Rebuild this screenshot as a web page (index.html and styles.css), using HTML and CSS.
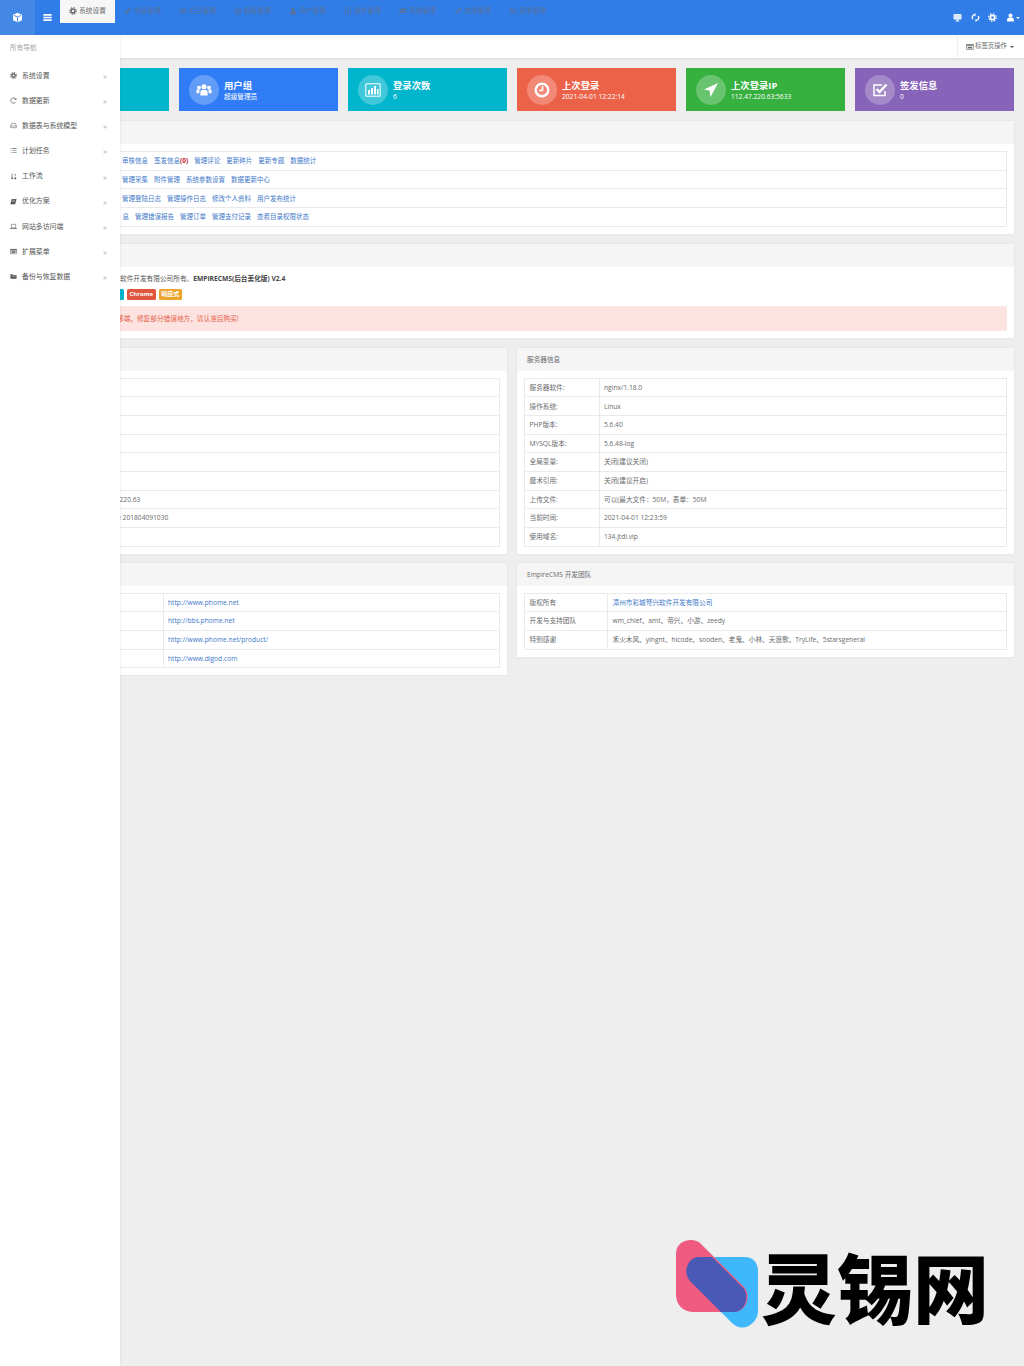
FILE: index.html
```html
<!DOCTYPE html>
<html lang="zh-CN">
<head>
<meta charset="utf-8">
<title>系统设置</title>
<link rel="stylesheet" href="styles.css">
</head>
<body>
<svg class="defs" width="0" height="0">
  <symbol id="cog" viewBox="0 0 16 16"><circle cx="8" cy="8" r="3.8" fill="none" stroke="currentColor" stroke-width="3"/><circle cx="8" cy="8" r="6.6" fill="none" stroke="currentColor" stroke-width="2.4" stroke-dasharray="2.6 2.58"/></symbol>
  <symbol id="pencil" viewBox="0 0 16 16"><path fill="currentColor" d="M1 15l1-4 8-8 3 3-8 8zM11 2l1-1 3 3-1 1z"/></symbol>
  <symbol id="list" viewBox="0 0 16 16"><path fill="currentColor" d="M1 3h14v2H1zM1 7h14v2H1zM1 11h14v2H1z"/></symbol>
  <symbol id="globe" viewBox="0 0 16 16"><circle cx="8" cy="8" r="6.5" fill="none" stroke="currentColor" stroke-width="1.5"/><path d="M1.5 8h13M8 1.5c-4 4-4 9 0 13M8 1.5c4 4 4 9 0 13" fill="none" stroke="currentColor"/></symbol>
  <symbol id="user" viewBox="0 0 16 16"><circle cx="8" cy="4.5" r="3.5" fill="currentColor"/><path fill="currentColor" d="M2 15v-3c0-2.500 2-4 3.500-4h5c1.500 0 3.500 1.500 3.500 4v3z"/></symbol>
  <symbol id="file" viewBox="0 0 16 16"><path fill="none" stroke="currentColor" stroke-width="1.5" d="M3 1.500h7l3 3v10H3zM5.500 7h5M5.500 10h5"/></symbol>
  <symbol id="truck" viewBox="0 0 16 16"><path fill="currentColor" d="M1 3h14v9H1z"/><path fill="none" stroke="#317de8" d="M1 7h14"/></symbol>
  <symbol id="wrench" viewBox="0 0 16 16"><path fill="currentColor" d="M1.500 12.500L8 6a4 4 0 0 1 5-5l-2.500 2.500 2 2L15 3a4 4 0 0 1-5 5l-6.500 6.500z"/></symbol>
  <symbol id="sliders" viewBox="0 0 16 16"><path fill="none" stroke="currentColor" stroke-width="1.500" d="M1 4h14M1 8h14M1 12h14M5 2v4M10 6v4M6 10v4"/></symbol>
  <symbol id="cube" viewBox="0 0 16 16"><path fill="currentColor" d="M8 1l6.500 3v8L8 15l-6.500-3V4z"/><path fill="none" stroke="#4488e6" stroke-width="1.400" d="M3 5l5 2.400L13 5M8 7.400V14"/></symbol>
  <symbol id="bars" viewBox="0 0 16 16"><path fill="currentColor" d="M2 3h12v2.400H2zM2 6.800h12v2.400H2zM2 10.600h12V13H2z"/></symbol>
  <symbol id="desktop" viewBox="0 0 16 16"><path fill="none" stroke="currentColor" stroke-width="1.600" d="M1.800 2.800h12.400v8H1.800z"/><path fill="currentColor" opacity=".8" d="M2 3h12v7.500H2z"/><path fill="currentColor" d="M5 13.500h6V15H5zM7 11h2v3H7z"/></symbol>
  <symbol id="refresh" viewBox="0 0 16 16"><path fill="none" stroke="currentColor" stroke-width="2.400" d="M4.800 3.500a5.500 5.500 0 0 0-1.500 7.500M11.200 12.500a5.500 5.500 0 0 0 1.500-7.500"/><path fill="currentColor" d="M8 0v6L4 3zM8 16v-6l4 3z"/></symbol>
  <symbol id="reload" viewBox="0 0 16 16"><path fill="none" stroke="currentColor" stroke-width="1.600" d="M13 11a6 6 0 1 1 0-6"/><path fill="currentColor" d="M14.500 2v4.500H10z"/></symbol>
  <symbol id="hdd" viewBox="0 0 16 16"><path fill="none" stroke="currentColor" stroke-width="1.200" d="M1.500 9L4 3h8l2.500 6v4h-13zM1.500 9h13"/></symbol>
  <symbol id="tasks" viewBox="0 0 16 16"><path fill="currentColor" d="M5 3h10v1.300H5zM5 7.500h10v1.300H5zM5 12h10v1.300H5zM1 3h2v1.300H1zM1 7.500h2v1.300H1zM1 12h2v1.300H1z"/></symbol>
  <symbol id="sort" viewBox="0 0 16 16"><path fill="currentColor" d="M4 1h1.500v10H8l-3 4-3-4h2zM10 2h3v6h-1V3.500h-2zM10 10h4v4h-4z"/></symbol>
  <symbol id="book" viewBox="0 0 16 16"><path fill="currentColor" d="M4 2h11l-3 11H1zM1 13v1.500h11V13z"/><path stroke="#fff" d="M5.500 5h6M4.800 8h6"/></symbol>
  <symbol id="laptop" viewBox="0 0 16 16"><path fill="none" stroke="currentColor" stroke-width="1.200" d="M3 3h10v8H3z"/><path fill="currentColor" d="M0 12h16v1.500H0z"/></symbol>
  <symbol id="window" viewBox="0 0 16 16"><path fill="none" stroke="currentColor" stroke-width="1.200" d="M1 3h14v10H1z"/><path fill="currentColor" d="M1 3h14v2.500H1zM3.500 7.500h9V11h-9z"/></symbol>
  <symbol id="folder" viewBox="0 0 16 16"><path fill="currentColor" d="M1 3h5l1.500 1.500H15V13H1z"/><path stroke="#fff" d="M3 7h12"/></symbol>
  <symbol id="group" viewBox="0 0 20 16"><circle cx="10" cy="4" r="3.200" fill="currentColor"/><circle cx="3.800" cy="5" r="2.300" fill="currentColor"/><circle cx="16.200" cy="5" r="2.300" fill="currentColor"/><path fill="currentColor" d="M5.500 15V10.500C5.500 8.500 7 8 8 8h4c1 0 2.500.5 2.500 2.500V15zM.5 12V9c0-1 1-1.500 2-1.500h2l-.5 4.500zM19.500 12V9c0-1-1-1.500-2-1.500h-2l.5 4.500z"/></symbol>
  <symbol id="chart" viewBox="0 0 16 16"><path fill="none" stroke="currentColor" d="M.8 1.800h14.400v12.400H.8z"/><path fill="currentColor" d="M3 8h2v4.500H3zM6 6h2v6.500H6zM9 4h2v8.500H9zM12 7h1.500v5.500H12z"/></symbol>
  <symbol id="clock" viewBox="0 0 16 16"><circle cx="8" cy="8" r="6.300" fill="none" stroke="currentColor" stroke-width="2.400"/><path fill="none" stroke="currentColor" stroke-width="1.600" d="M8.500 4v4.500H5"/></symbol>
  <symbol id="send" viewBox="0 0 16 16"><path fill="currentColor" d="M15 1L7.500 15l-1-6.500L1 7.500z"/></symbol>
  <symbol id="check" viewBox="0 0 16 16"><path fill="none" stroke="currentColor" stroke-width="1.500" d="M13 9v4.500H2V3h8"/><path fill="none" stroke="currentColor" stroke-width="2.400" d="M4.500 7l3 3L14.500 2.500"/></symbol>
</svg>

<header class="topbar">
  <div class="brand"><svg class="ic-brand"><use href="#cube"/></svg></div>
  <div class="toggle"><svg class="ic-brand"><use href="#bars"/></svg></div>
  <nav class="tabs">
    <a class="tab active"><svg class="ic"><use href="#cog"/></svg>系统设置</a>
    <a class="tab"><svg class="ic"><use href="#pencil"/></svg>信息管理</a>
    <a class="tab"><svg class="ic"><use href="#list"/></svg>栏目管理</a>
    <a class="tab"><svg class="ic"><use href="#globe"/></svg>模板管理</a>
    <a class="tab"><svg class="ic"><use href="#user"/></svg>用户管理</a>
    <a class="tab"><svg class="ic"><use href="#file"/></svg>插件管理</a>
    <a class="tab"><svg class="ic"><use href="#truck"/></svg>商城管理</a>
    <a class="tab"><svg class="ic"><use href="#wrench"/></svg>其他管理</a>
    <a class="tab"><svg class="ic"><use href="#sliders"/></svg>菜单管理</a>
  </nav>
  <div class="tools">
    <svg class="ic-tool"><use href="#desktop"/></svg>
    <svg class="ic-tool"><use href="#refresh"/></svg>
    <svg class="ic-tool"><use href="#cog"/></svg>
    <svg class="ic-tool"><use href="#user"/></svg>
    <span class="caret caret-white"></span>
  </div>
</header>

<div class="tabbar">
  <button class="tabops"><svg class="ic"><use href="#window"/></svg>标签页操作<span class="caret"></span></button>
</div>

<aside class="sidebar">
  <div class="side-title">所有导航</div>
  <ul class="side-menu">
    <li><svg class="ic"><use href="#cog"/></svg><span>系统设置</span><b>»</b></li>
    <li><svg class="ic"><use href="#reload"/></svg><span>数据更新</span><b>»</b></li>
    <li><svg class="ic"><use href="#hdd"/></svg><span>数据表与系统模型</span><b>»</b></li>
    <li><svg class="ic"><use href="#tasks"/></svg><span>计划任务</span><b>»</b></li>
    <li><svg class="ic"><use href="#sort"/></svg><span>工作流</span><b>»</b></li>
    <li><svg class="ic"><use href="#book"/></svg><span>优化方案</span><b>»</b></li>
    <li><svg class="ic"><use href="#laptop"/></svg><span>网站多访问端</span><b>»</b></li>
    <li><svg class="ic"><use href="#window"/></svg><span>扩展菜单</span><b>»</b></li>
    <li><svg class="ic"><use href="#folder"/></svg><span>备份与恢复数据</span><b>»</b></li>
  </ul>
</aside>

<main class="content">
  <section class="cards">
    <div class="card teal"></div>
    <div class="card blue"><span class="disc"><svg><use href="#group"/></svg></span><div><h3>用户组</h3><p>超级管理员</p></div></div>
    <div class="card teal"><span class="disc"><svg><use href="#chart"/></svg></span><div><h3>登录次数</h3><p>6</p></div></div>
    <div class="card orange"><span class="disc"><svg><use href="#clock"/></svg></span><div><h3>上次登录</h3><p>2021-04-01 12:22:14</p></div></div>
    <div class="card green"><span class="disc"><svg><use href="#send"/></svg></span><div><h3>上次登录IP</h3><p>112.47.220.63:5633</p></div></div>
    <div class="card purple"><span class="disc"><svg><use href="#check"/></svg></span><div><h3>签发信息</h3><p>0</p></div></div>
  </section>

  <section class="panel">
    <div class="panel-head"></div>
    <div class="panel-body">
      <table class="grid">
        <tr><td><div class="linkrow"><a>审核信息</a><a>签发信息<em>(0)</em></a><a>管理评论</a><a>更新碎片</a><a>更新专题</a><a>数据统计</a></div></td></tr>
        <tr><td><div class="linkrow"><a>管理采集</a><a>附件管理</a><a>系统参数设置</a><a>数据更新中心</a></div></td></tr>
        <tr><td><div class="linkrow"><a>管理登陆日志</a><a>管理操作日志</a><a>修改个人资料</a><a>用户发布统计</a></div></td></tr>
        <tr><td><div class="linkrow linkrow-wide"><a>息</a><a>管理错误报告</a><a>管理订单</a><a>管理支付记录</a><a>查看目录权限状态</a></div></td></tr>
      </table>
    </div>
  </section>

  <section class="panel">
    <div class="panel-head"></div>
    <div class="panel-body notice">
      <p class="copy">软件开发有限公司所有。<strong>EMPIRECMS(后台美化版) V2.4</strong></p>
      <div class="badges"><span class="badge b-teal"></span><span class="badge b-red">Chrome</span><span class="badge b-amber">响应式</span></div>
      <div class="alert">移端，修复部分错误地方，请认准后购买!</div>
    </div>
  </section>

  <section class="columns">
    <div class="panel">
      <div class="panel-head"></div>
      <div class="panel-body">
        <table class="grid info">
          <tr><td></td><td></td></tr>
          <tr><td></td><td></td></tr>
          <tr><td></td><td></td></tr>
          <tr><td></td><td></td></tr>
          <tr><td></td><td></td></tr>
          <tr><td></td><td></td></tr>
          <tr><td></td><td>112.47.220.63</td></tr>
          <tr><td></td><td>Release 201804091030</td></tr>
          <tr><td></td><td></td></tr>
        </table>
      </div>
    </div>
    <div class="panel">
      <h4 class="panel-head">服务器信息</h4>
      <div class="panel-body">
        <table class="grid info">
          <tr><td>服务器软件:</td><td>nginx/1.18.0</td></tr>
          <tr><td>操作系统:</td><td>Linux</td></tr>
          <tr><td>PHP版本:</td><td>5.6.40</td></tr>
          <tr><td>MYSQL版本:</td><td>5.6.48-log</td></tr>
          <tr><td>全局变量:</td><td>关闭(建议关闭)</td></tr>
          <tr><td>魔术引用:</td><td>关闭(建议开启)</td></tr>
          <tr><td>上传文件:</td><td>可以(最大文件：50M，表单：50M</td></tr>
          <tr><td>当前时间:</td><td>2021-04-01 12:23:59</td></tr>
          <tr><td>使用域名:</td><td>134.jtdl.vip</td></tr>
        </table>
      </div>
    </div>
    <div class="panel">
      <div class="panel-head"></div>
      <div class="panel-body">
        <table class="grid sites">
          <tr><td></td><td><a>http://www.phome.net</a></td></tr>
          <tr><td></td><td><a>http://bbs.phome.net</a></td></tr>
          <tr><td></td><td><a>http://www.phome.net/product/</a></td></tr>
          <tr><td></td><td><a>http://www.digod.com</a></td></tr>
        </table>
      </div>
    </div>
    <div class="panel">
      <h4 class="panel-head">EmpireCMS 开发团队</h4>
      <div class="panel-body">
        <table class="grid team">
          <tr><td>版权所有</td><td><a>漳州市彩城弩兴软件开发有限公司</a></td></tr>
          <tr><td>开发与支持团队</td><td>wm_chief、amt、帝兴、小游、zeedy</td></tr>
          <tr><td>特别感谢</td><td>禾火木风、yingnt、hicode、sooden、老鬼、小林、天浪歌、TryLife、5starsgeneral</td></tr>
        </table>
      </div>
    </div>
  </section>
</main>

<div class="watermark">
  <svg class="wm-mark" viewBox="0 0 82 89">
    <path fill="#3fb8fb" d="M24 17H69C77 17 82 23 82 31V71C82 83 67 94 56 83L14 41C6 33 12 17 24 17Z"/>
    <path fill="#ee5a80" d="M0 14C0 4 8 0 15 0C19 0 22 1 25 4L68 47C76 56 70 72 58 72H18C7 72 0 65 0 54Z"/>
    <path fill="#4a58b6" d="M23 17H36L68 49C74 58 68 72 58 72H45L14 41C6 32 12 17 23 17Z"/>
  </svg>
  <span class="wm-text">灵锡网</span>
</div>
</body>
</html>
```

FILE: styles.css
```css
* { box-sizing: border-box; }
html, body { margin: 0; padding: 0; }
body {
  position: relative;
  width: 1024px;
  height: 1366px;
  overflow: hidden;
  background: #eeeeee;
  color: #676a6c;
  font: 6.67px/1.4 "Open Sans", "Noto Sans CJK SC", sans-serif;
}
.defs { position: absolute; }
h3, h4, p, ul { margin: 0; padding: 0; }
a { color: #3d77c9; }

.topbar {
  display: flex;
  height: 35px;
  background: #317de8;
}
.brand {
  display: flex;
  align-items: center;
  justify-content: center;
  width: 35px;
  background: #4488e6;
}
.toggle {
  display: flex;
  align-items: center;
  justify-content: center;
  width: 25px;
}
.ic-brand { width: 11px; height: 11px; color: #fff; }
.tabs { display: flex; align-items: flex-start; }
.tab {
  display: flex;
  align-items: center;
  justify-content: center;
  gap: 2px;
  width: 55px;
  height: 21px;
  color: #56719b;
}
.tab.active { height: 23px; padding-bottom: 2px; background: #f6f6f6; color: #676a6c; }
.ic { width: 8px; height: 8px; flex: none; }
.tools {
  display: flex;
  align-items: center;
  gap: 8.5px;
  margin-left: auto;
  padding-right: 4px;
}
.ic-tool { width: 9px; height: 9px; color: #fff; }
.caret {
  display: inline-block;
  margin-left: 2px;
  border: 2px solid transparent;
  border-top-color: #555;
  border-bottom: 0;
  vertical-align: middle;
}
.caret-white { margin-left: -7px; border-top-color: #fff; }

.tabbar {
  display: flex;
  justify-content: flex-end;
  height: 23px;
  padding-right: 10px;
  background: #fff;
  box-shadow: 0 1px 2px rgba(0, 0, 0, .1);
}
.tabops {
  display: flex;
  align-items: center;
  gap: 1px;
  padding: 0 0 0 8px;
  border: 0;
  border-left: 1px solid #eee;
  background: none;
  color: #676a6c;
  font: inherit;
  font-size: 6.4px;
}

.sidebar {
  position: absolute;
  top: 35px;
  left: 0;
  width: 120px;
  height: 1331px;
  background: #fff;
  box-shadow: 1px 0 2px rgba(0, 0, 0, .05);
}
.side-title { padding: 8px 10px 0; color: #a5a5a5; line-height: 10px; }
.side-menu { margin-top: 10px; list-style: none; }
.side-menu li {
  display: flex;
  align-items: center;
  gap: 5px;
  height: 25.15px;
  padding: 0 13px 0 10px;
  color: #555;
  font-size: 6.9px;
}
.side-menu .ic { width: 7px; height: 7px; }
.side-menu b { margin-left: auto; color: #aaa; font-size: 8px; font-weight: 400; }

.content {
  display: flex;
  flex-direction: column;
  gap: 10px;
  padding: 10px;
}
.cards {
  display: grid;
  grid-template-columns: repeat(6, 1fr);
  gap: 10px;
}
.card {
  display: flex;
  align-items: center;
  gap: 5px;
  height: 43px;
  padding-left: 10px;
  color: #fff;
}
.card h3 { font-size: 9.33px; line-height: 13px; font-weight: 700; }
.card p { font-size: 6.67px; line-height: 9px; }
.disc {
  display: flex;
  align-items: center;
  justify-content: center;
  flex: none;
  width: 30px;
  height: 30px;
  border-radius: 50%;
  background: rgba(255, 255, 255, .25);
}
.disc svg { width: 16px; height: 16px; color: #fff; }
.teal { background: #00b5cc; }
.blue { background: #2f7cf6; }
.orange { background: #ec6249; }
.green { background: #36b03f; }
.purple { background: #8763b9; }

.panel {
  background: #fff;
  box-shadow: 0 0 2px rgba(0, 0, 0, .08);
}
.panel-head {
  height: 23px;
  padding-left: 10px;
  background: #f5f5f5;
  color: #676a6c;
  font-size: 6.67px;
  font-weight: 400;
  line-height: 23px;
}
.panel-body { padding: 7px; }
.grid {
  width: 100%;
  border-collapse: collapse;
  table-layout: fixed;
}
.grid td {
  height: 18.67px;
  padding: 1.5px 5px 0 4.5px;
  border: 1px solid #eaeaea;
  line-height: 1;
  white-space: nowrap;
}
.info td:first-child { width: 74.5px; }
.sites td:first-child { width: 145.5px; }
.team td:first-child { width: 83px; }
.linkrow { display: flex; align-items: center; gap: 6px; padding-left: 99.5px; font-size: 6.5px; }
.linkrow-wide { padding-left: 100px; }
em { color: #c82333; font-style: normal; font-weight: 700; }

.notice { padding-top: 8px; }
.copy { line-height: 8px; padding-left: 103px; color: #555; }
.copy strong { color: #444; }
.badges { display: flex; justify-content: flex-start; gap: 3px; margin: 6px 0 6px; padding-left: 95px; }
.badge {
  height: 11px;
  padding: 0 2.5px;
  border-radius: 1.500px;
  color: #fff;
  font-size: 6px;
  font-weight: 700;
  line-height: 11px;
}
.b-teal { width: 12px; background: #00b5cc; }
.b-red { background: #e0563f; }
.b-amber { background: #e9a52e; }
.alert {
  height: 25px;
  padding-left: 100px;
  border-radius: 2px;
  background: #fde3df;
  color: #e4604c;
  line-height: 25px;
}

.columns {
  display: grid;
  grid-template-columns: 1fr 1fr;
  gap: 9px 10px;
  align-items: start;
}

.watermark {
  position: absolute;
  top: 1240px;
  left: 676px;
  display: flex;
  align-items: center;
  gap: 3px;
}
.wm-mark { width: 82px; height: 89px; flex: none; }
.wm-text {
  color: #000;
  font: 900 76px/1 "Noto Sans CJK SC", sans-serif;
}
```
